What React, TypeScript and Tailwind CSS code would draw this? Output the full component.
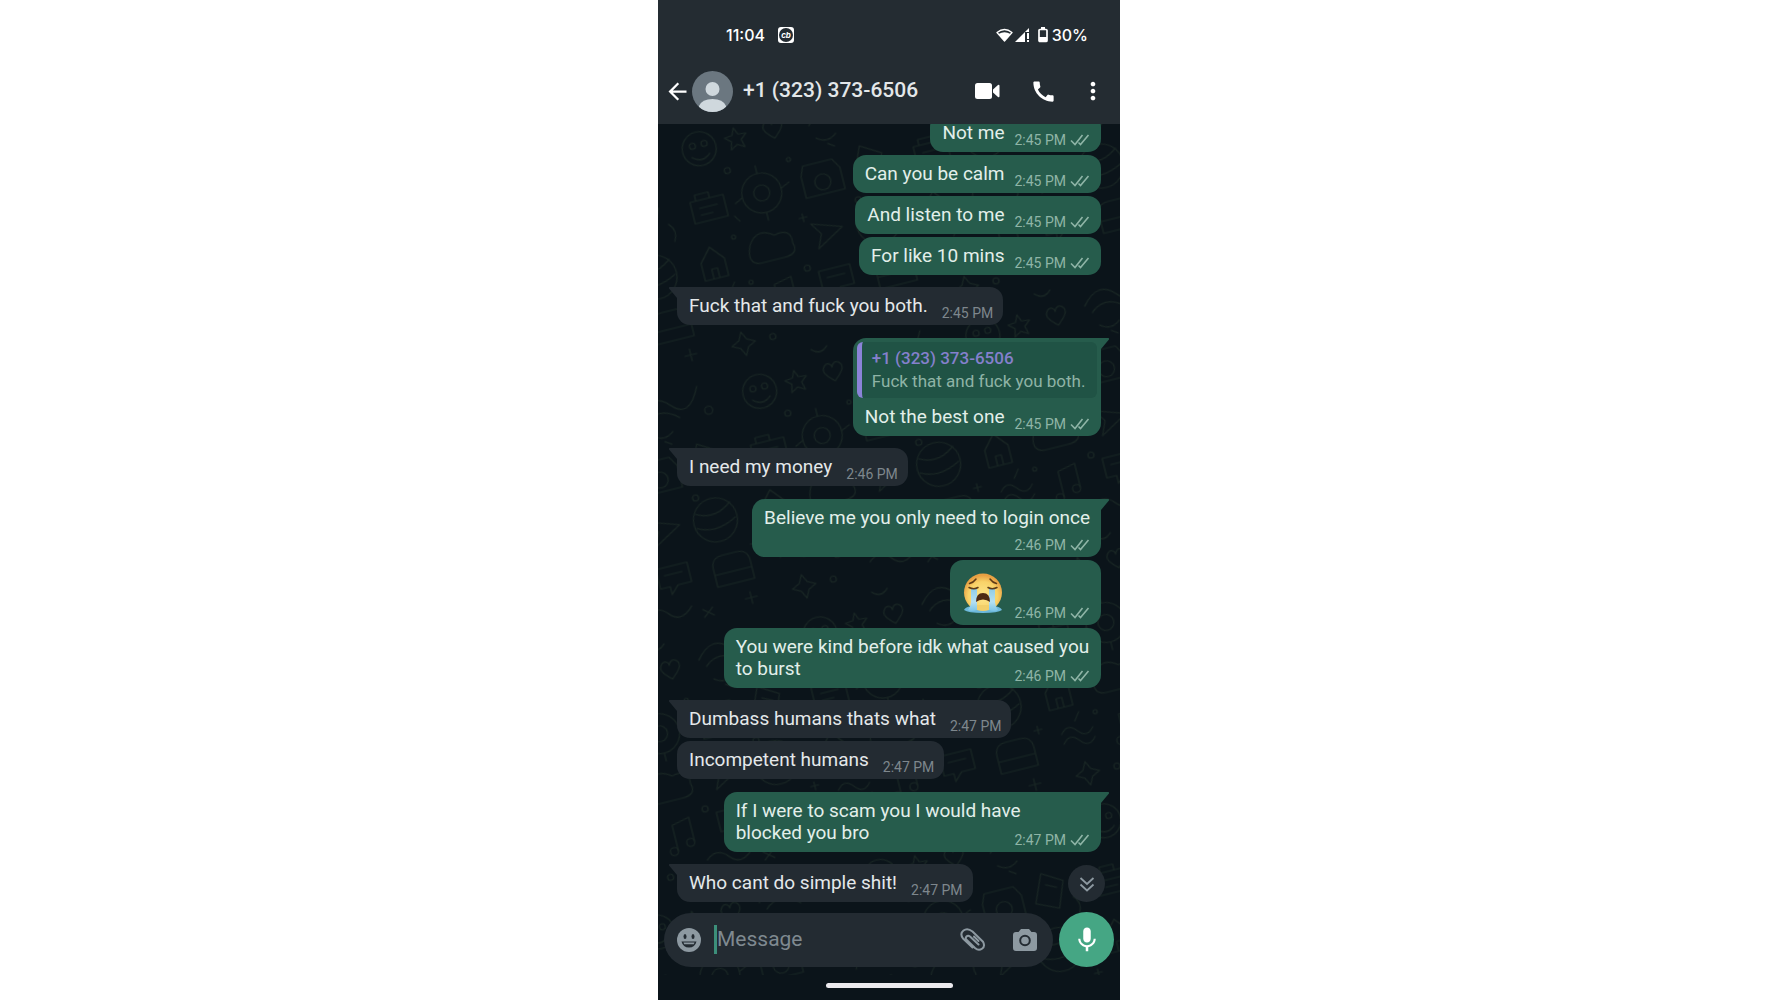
import { useState } from 'react';
import { MdArrowBack, MdCall, MdMic, MdMoreVert } from 'react-icons/md';
import clsx from 'clsx';

type Message = {
  from: 'me' | 'them';
  time: string;
  lines?: string[];
  first?: boolean;
  stacked?: boolean;
  crying?: boolean;
  quote?: { author: string; text: string };
};

const PHONE = '+1 (323) 373-6506';

const messages: Message[] = [
  { from: 'me', lines: ['Not me'], time: '2:45 PM' },
  { from: 'me', lines: ['Can you be calm'], time: '2:45 PM' },
  { from: 'me', lines: ['And listen to me'], time: '2:45 PM' },
  { from: 'me', lines: ['For like 10 mins'], time: '2:45 PM' },
  { from: 'them', lines: ['Fuck that and fuck you both.'], time: '2:45 PM', first: true },
  {
    from: 'me',
    lines: ['Not the best one'],
    time: '2:45 PM',
    first: true,
    quote: { author: PHONE, text: 'Fuck that and fuck you both.' },
  },
  { from: 'them', lines: ['I need my money'], time: '2:46 PM', first: true },
  { from: 'me', lines: ['Believe me you only need to login once'], time: '2:46 PM', first: true, stacked: true },
  { from: 'me', crying: true, time: '2:46 PM' },
  { from: 'me', lines: ['You were kind before idk what caused you', 'to burst'], time: '2:46 PM' },
  { from: 'them', lines: ['Dumbass humans thats what'], time: '2:47 PM', first: true },
  { from: 'them', lines: ['Incompetent humans'], time: '2:47 PM' },
  { from: 'me', lines: ['If I were to scam you I would have', 'blocked you bro'], time: '2:47 PM', first: true },
  { from: 'them', lines: ['Who cant do simple shit!'], time: '2:47 PM', first: true },
];

function Wallpaper() {
  return (
    <svg className="absolute inset-0 w-full h-full" aria-hidden="true">
      <defs>
        <pattern id="doodles" width="230" height="250" patternUnits="userSpaceOnUse" patternTransform="rotate(-14)">
          <g fill="none" stroke="#182523" strokeWidth="1.2" strokeLinecap="round" strokeLinejoin="round">
            <circle cx="34" cy="34" r="17" />
            <circle cx="28" cy="30" r="3" />
            <circle cx="40" cy="30" r="3" />
            <path d="M25 41q9 8 18 0" />
            <path d="M72 22l3 7 8 1-6 5 2 8-7-4-7 4 2-8-6-5 8-1z" />
            <path d="M110 42c-8-7-12-12-7-17 4-3 7 0 7 3 1-4 5-6 8-3 5 5 0 10-8 17z" />
            <path d="M140 30q18-22 34-4t30-12M146 38q16-14 34 2" />
            <circle cx="210" cy="40" r="4" />
            <path d="M12 84h34v22H12zM18 84v-6h14v6M20 92h18M20 99h12" />
            <circle cx="84" cy="92" r="20" />
            <circle cx="84" cy="92" r="8" />
            <path d="M64 92l-8 4M104 92l9-4M84 72v-8M84 112v8" />
            <path d="M130 76h30l6 10v22h-40V86z" />
            <circle cx="146" cy="96" r="8" />
            <path d="M190 70l20 12-10 26-22-10z M192 82l10 5" />
            <path d="M8 146l12-14 12 14v18H8zM17 164v-10h6v10" />
            <path d="M60 140q10-16 26-4 18-4 16 12 4 12-12 12H66q-14-2-6-20z" />
            <path d="M124 134l30 10-28 16 6-14z" />
            <circle cx="190" cy="148" r="22" />
            <path d="M172 138q18 10 36-4M170 152q18 10 40-2" />
            <path d="M14 190q8-10 16 0t16 0M14 200q8-10 16 0t16 0" />
            <path d="M74 184v26M74 184l18-4v24" />
            <circle cx="70" cy="210" r="4" />
            <circle cx="88" cy="205" r="4" />
            <path d="M120 182h32v20h-14l-8 8v-8h-10z M127 190h18" />
            <path d="M176 196q0-12 12-12h14q12 0 12 12v18h-38z M176 202h38" />
            <path d="M30 222l4 8 8 4-8 4-4 8-4-8-8-4 8-4z" />
            <path d="M100 226q12-10 22 2t24-2M156 232l10 8M166 232l-10 8" />
            <circle cx="60" cy="234" r="3" />
            <circle cx="56" cy="62" r="3" />
            <circle cx="118" cy="66" r="2" />
            <circle cx="176" cy="122" r="3" />
            <circle cx="46" cy="128" r="2" />
            <circle cx="110" cy="176" r="3" />
            <circle cx="52" cy="176" r="2" />
            <path d="M206 226v12M200 232h12M118 122v8M114 126h8M52 108l4 6M160 60l6 4M222 176v8M218 180h8" />
            <path d="M94 6q8 8 16 0M150 52q10 8 20 0M216 100q8 8 2 18M36 172l-6 8" />
          </g>
        </pattern>
      </defs>
      <rect width="100%" height="100%" fill="url(#doodles)" />
    </svg>
  );
}

function CryingFace() {
  return (
    <svg width="42" height="42" viewBox="0 0 42 42" role="img" aria-label="Loudly crying face">
      <defs>
        <radialGradient id="face" cx="50%" cy="60%" r="55%">
          <stop offset="0" stopColor="#fde68c" />
          <stop offset="0.7" stopColor="#f8d268" />
          <stop offset="1" stopColor="#e8a043" />
        </radialGradient>
        <linearGradient id="tear" x1="0" y1="0" x2="0" y2="1">
          <stop offset="0" stopColor="#8ccbe8" />
          <stop offset="0.6" stopColor="#b5e0f2" />
          <stop offset="1" stopColor="#7cc4e6" />
        </linearGradient>
      </defs>
      <circle cx="21" cy="20.5" r="19" fill="url(#face)" />
      <path d="M2 38q2-4 8-3.500h22q6-.5 8 3.500-4 3-19 3T2 38z" fill="#6db9dc" />
      <path d="M15 33h12v5q-6 2-12 0z" fill="#f2cf6a" />
      <path d="M9 16h6v22q-6 2-9 0 3-4 3-8z" fill="url(#tear)" />
      <path d="M27 16h6v14q0 4 3 8-3 2-9 0z" fill="url(#tear)" />
      <path d="M7 15.500q5 2.500 9 0M26 15.500q4 2.500 9 0M7.500 11.500q4-1 6.500-4.500M34.500 11.500q-4-1-6.500-4.500" fill="none" stroke="#5e3b17" strokeWidth="1.5" strokeLinecap="round" />
      <path d="M14 30q0-9 7-9t7 9q-3-2.500-7-2.500T14 30z" fill="#4d2a14" />
    </svg>
  );
}

function Ticks() {
  return (
    <svg width="20" height="12" viewBox="0 0 20 12" fill="none" stroke="currentColor" strokeWidth="1.6" aria-label="Delivered">
      <path d="M1 6.500l4 4L12.500 1M8.500 8.500l2 2L18.500 1" />
    </svg>
  );
}

function Bubble({ message }: { message: Message }) {
  const mine = message.from === 'me';
  const lines = message.lines ?? [];

  return (
    <li
      className={clsx(
        'relative shrink-0 rounded-[13px]',
        mine ? 'self-end bg-[#265c4c] text-[#e2efea]' : 'self-start bg-[#232b32] text-[#e4e8ea]',
        !message.first && 'mt-[3px]',
        message.first && (mine ? 'mt-[13px] rounded-tr-none' : 'mt-3 rounded-tl-none'),
        lines.length > 1 && 'w-[89%]',
      )}
    >
      {message.first && (
        <svg
          className={clsx('absolute top-0 w-2 h-3', mine ? 'left-full text-[#265c4c]' : 'right-full -scale-x-100 text-[#232b32]')}
          viewBox="0 0 8 12"
          aria-hidden="true"
        >
          <path d="M0 0h7q2 0 .5 2L0 11z" fill="currentColor" />
        </svg>
      )}
      {message.quote && (
        <div className="px-1 pt-1">
          <blockquote className="py-[5px] pl-[10px] pr-[5px] rounded-md bg-[#205345] border-l-[5px] border-[#8b83d8] text-[17px] leading-[23px]">
            <p className="font-medium text-[#8580cd]">{message.quote.author}</p>
            <p className="text-[#8fb3a6]">{message.quote.text}</p>
          </blockquote>
        </div>
      )}
      <div className={clsx('pl-3 pb-1 text-[19px] leading-[22px]', mine ? 'pr-[11px]' : 'pr-[10px]', message.crying ? 'pt-3' : 'pt-2')}>
        {(message.stacked ? lines : lines.slice(0, -1)).map((line) => (
          <p key={line} className={clsx('whitespace-nowrap', message.stacked && 'pb-2')}>
            {line}
          </p>
        ))}
        <div className={clsx('flex items-end', mine ? 'gap-[10px]' : 'gap-[14px]')}>
          {message.crying && (
            <div className="pb-[7px]">
              <CryingFace />
            </div>
          )}
          {!message.stacked && !message.crying && <p className="pb-1 whitespace-nowrap">{lines[lines.length - 1]}</p>}
          <span className={clsx('ml-auto flex items-center gap-1 text-sm leading-4 whitespace-nowrap', mine ? 'text-[#8fb5a7]' : 'text-[#7e878d]')}>
            <time>{message.time}</time>
            {mine && <Ticks />}
          </span>
        </div>
      </div>
    </li>
  );
}

function StatusBar() {
  return (
    <div className="flex items-center h-[70px] pl-[68px] pr-8 text-base font-medium text-white font-[Inter,sans-serif]">
      <span>11:04</span>
      <svg className="ml-3" width="18" height="18" viewBox="0 0 18 18" aria-hidden="true">
        <rect x="1" y="1" width="16" height="16" rx="3" fill="#fff" />
        <circle cx="9" cy="9" r="7" fill="#242c32" />
        <text x="9" y="12" textAnchor="middle" fontSize="8" fontWeight="700" fontStyle="italic" fill="#fff">cb</text>
      </svg>
      <div className="ml-auto flex items-center">
        <svg width="17" height="14" viewBox="0 0 17 14" aria-hidden="true">
          <path d="M1 4.500Q8.500-1.500 16 4.500L8.500 13z" fill="none" stroke="#fff" strokeWidth="1.3" strokeLinejoin="round" />
          <path d="M2.500 6q6-3.500 12 0l-6 7z" fill="#fff" />
        </svg>
        <svg className="ml-[2px]" width="15" height="14" viewBox="0 0 15 14" aria-hidden="true">
          <path d="M0 14L14 0v14z" fill="#fff" />
          <path d="M10 4h5v10h-5z" fill="#242c32" />
          <path d="M12 5h2v6h-2zM12 12h2v2h-2z" fill="#fff" />
        </svg>
        <svg className="ml-2 mr-1" width="10" height="16" viewBox="0 0 10 16" aria-hidden="true">
          <path d="M3 0h4v2H3z" fill="#fff" />
          <rect x="1" y="2.500" width="8" height="12" rx="1" fill="none" stroke="#fff" strokeWidth="1.7" />
          <path d="M1 10h8v5H1z" fill="#fff" />
        </svg>
        <span>30%</span>
      </div>
    </div>
  );
}

function ChatHeader() {
  return (
    <div className="flex items-center h-[42px] mb-3 pl-[6px] pr-[13px] text-white">
      <button type="button" aria-label="Back">
        <MdArrowBack size={27} />
      </button>
      <svg className="shrink-0 ml-px" width="41" height="41" viewBox="0 0 41 41" aria-hidden="true">
        <clipPath id="avatar">
          <circle cx="20.5" cy="20.5" r="20.5" />
        </clipPath>
        <g clipPath="url(#avatar)">
          <path d="M0 0h41v41H0z" fill="#6b7780" />
          <circle cx="20.5" cy="18" r="7" fill="#cfd8dd" />
          <path d="M7 41V35q3-7 13.500-7T34 35v6z" fill="#cfd8dd" />
        </g>
      </svg>
      <h1 className="ml-[10px] text-[21px] font-medium text-[#e3e7e9] whitespace-nowrap">{PHONE}</h1>
      <div className="ml-auto flex items-center">
        <button type="button" aria-label="Video call">
          <svg width="25" height="18" viewBox="0 0 25 18" fill="currentColor">
            <rect x="0" y="1" width="17" height="16" rx="2.5" />
            <path d="M18 7.500L23 3q1.500-.8 1.500 1v10q0 1.800-1.500 1l-5-4.500z" />
          </svg>
        </button>
        <button type="button" aria-label="Voice call" className="ml-[30px]">
          <MdCall size={27} />
        </button>
        <button type="button" aria-label="More options" className="ml-[22px]">
          <MdMoreVert size={28} />
        </button>
      </div>
    </div>
  );
}

function Composer() {
  const [draft, setDraft] = useState('');

  return (
    <form className="relative flex items-center gap-[6px] pl-[6px] pr-[6px] pt-[10px] pb-2" onSubmit={(e) => e.preventDefault()}>
      <div className="flex-1 min-w-0 flex items-center h-[54px] pl-[13px] pr-4 rounded-full bg-[#232b32] text-[#8d99a1]">
        <button type="button" aria-label="Emoji">
          <svg width="24" height="24" viewBox="0 0 24 24">
            <circle cx="12" cy="12" r="12" fill="currentColor" />
            <ellipse cx="8" cy="8.5" rx="1.5" ry="2.5" fill="#232b32" />
            <ellipse cx="16" cy="8.5" rx="1.5" ry="2.5" fill="#232b32" />
            <path d="M4.500 13.500h15q-1.500 6-7.500 6t-7.500-6z" fill="#232b32" />
            <path d="M6.500 14.500h11l-.7 1.700H7.200z" fill="currentColor" />
          </svg>
        </button>
        <span className="ml-[13px] w-[3px] h-[29px] bg-[#3c8f7a]" />
        <input
          type="text"
          aria-label="Message"
          placeholder="Message"
          value={draft}
          onChange={(e) => setDraft(e.target.value)}
          className="flex-1 min-w-0 bg-transparent outline-none text-[21px] text-white placeholder:text-[#7f8990]"
        />
        <button type="button" aria-label="Attach">
          <svg width="26" height="24" viewBox="0 0 26 24" fill="none" stroke="currentColor" strokeWidth="2" strokeLinecap="round" strokeLinejoin="round">
            <path d="M18.500 16.500L10 8.500q-2-1.600-3.500 0t0 3.300l8.500 8.200q3.500 3.200 7 .8t1-7L12.500 3.500Q7.500-.5 3.500 2.500t-.5 8l9.500 9" />
            <path d="M14 8.500l4.500 4.500" />
          </svg>
        </button>
        <button type="button" aria-label="Camera" className="ml-[27px]">
          <svg width="24" height="22" viewBox="0 0 24 22">
            <path d="M8 0h8l2.500 3H21q3 0 3 3v13q0 3-3 3H3q-3 0-3-3V6q0-3 3-3h2.500z" fill="currentColor" />
            <circle cx="12" cy="11.5" r="4.8" fill="none" stroke="#232b32" strokeWidth="2" />
          </svg>
        </button>
      </div>
      <button type="button" aria-label="Record voice message" className="flex items-center justify-center size-[55px] shrink-0 rounded-full bg-[#45a684] text-white">
        <MdMic size={30} />
      </button>
    </form>
  );
}

export default function App() {
  return (
    <div className="min-h-screen bg-white font-[Roboto,sans-serif]">
      <main className="flex flex-col h-screen w-full max-w-[462px] mx-auto bg-[#0b141a]">
        <header className="shrink-0 bg-[#242c32]">
          <StatusBar />
          <ChatHeader />
        </header>
        <div className="relative flex-1 min-h-0 flex flex-col">
          <Wallpaper />
          <div className="relative flex-1 min-h-0">
            <ul className="flex flex-col justify-end h-full px-[19px] overflow-hidden">
              {messages.map((message, i) => (
                <Bubble key={i} message={message} />
              ))}
            </ul>
            <button
              type="button"
              aria-label="Scroll to latest"
              className="absolute right-[15px] bottom-0 flex items-center justify-center size-[37px] rounded-full bg-[#232b32] text-[#8d99a1]"
            >
              <svg width="16" height="16" viewBox="0 0 16 16" fill="none" stroke="currentColor" strokeWidth="1.8">
                <path d="M1.500 2L8 8l6.500-6M1.500 8.500l6.500 6 6.500-6" />
              </svg>
            </button>
          </div>
          <Composer />
        </div>
        <div className="shrink-0 flex justify-center pt-2 pb-3">
          <div className="w-[127px] h-[5px] rounded-full bg-[#eceaee]" />
        </div>
      </main>
    </div>
  );
}
